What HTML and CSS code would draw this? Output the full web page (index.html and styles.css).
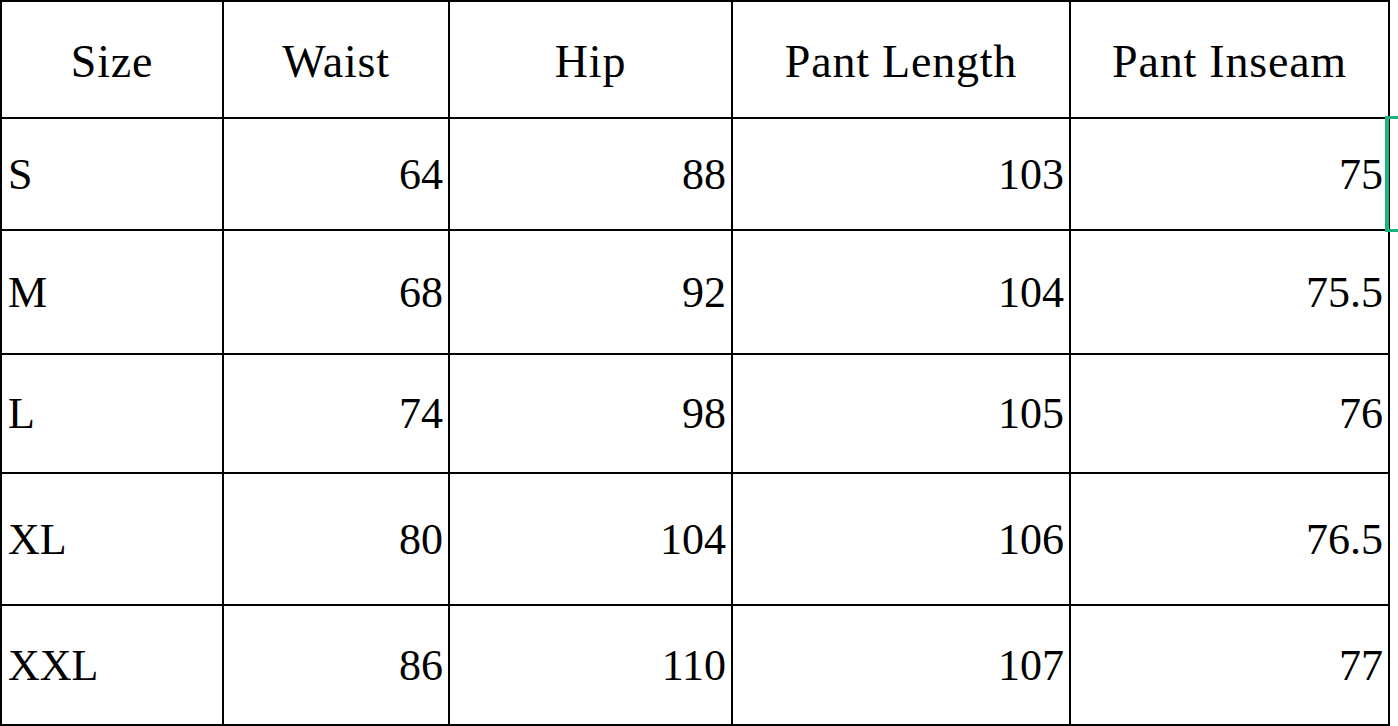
FILE: index.html
```html
<!DOCTYPE html>
<html>
<head>
<meta charset="utf-8">
<link rel="stylesheet" href="styles.css">
</head>
<body>
<div class="sheet">
  <div class="grid">
    <div class="cell head">Size</div>
    <div class="cell head">Waist</div>
    <div class="cell head">Hip</div>
    <div class="cell head">Pant Length</div>
    <div class="cell head">Pant Inseam</div>

    <div class="cell label">S</div>
    <div class="cell num">64</div>
    <div class="cell num">88</div>
    <div class="cell num">103</div>
    <div class="cell num">75</div>

    <div class="cell label">M</div>
    <div class="cell num">68</div>
    <div class="cell num">92</div>
    <div class="cell num">104</div>
    <div class="cell num">75.5</div>

    <div class="cell label">L</div>
    <div class="cell num">74</div>
    <div class="cell num">98</div>
    <div class="cell num">105</div>
    <div class="cell num">76</div>

    <div class="cell label">XL</div>
    <div class="cell num">80</div>
    <div class="cell num">104</div>
    <div class="cell num">106</div>
    <div class="cell num">76.5</div>

    <div class="cell label">XXL</div>
    <div class="cell num">86</div>
    <div class="cell num">110</div>
    <div class="cell num">107</div>
    <div class="cell num">77</div>
  </div>
  <div class="selection"></div>
</div>
</body>
</html>
```

FILE: styles.css
```css
html, body {
  margin: 0;
  padding: 0;
  background: #ffffff;
}

body {
  width: 1398px;
  height: 726px;
  overflow: hidden;
  font-family: "Liberation Serif", "Times New Roman", serif;
  color: #000000;
}

.sheet {
  position: relative;
  width: 1398px;
  height: 726px;
}

.grid {
  display: grid;
  width: 1390px;
  height: 726px;
  box-sizing: border-box;
  padding: 2px;
  gap: 2px;
  background: #000000;
  grid-template-columns: 220px 224px 281px 336px 317px;
  grid-template-rows: 115px 110px 122px 117px 130px 118px;
}

.cell {
  background: #ffffff;
  display: flex;
  align-items: center;
  font-size: 44px;
  line-height: normal;
  padding: 0 5px;
  white-space: nowrap;
}

.head {
  justify-content: center;
  font-size: 46px;
  letter-spacing: 0.8px;
  padding-top: 4px;
}

.label {
  justify-content: flex-start;
  padding-left: 6px;
}

.num {
  justify-content: flex-end;
  padding-right: 5px;
}

.selection {
  position: absolute;
  left: 1385px;
  top: 116px;
  width: 13px;
  height: 116px;
  box-sizing: border-box;
  border-left: 4px solid #1bb37f;
  border-top: 3px solid #1bb37f;
  border-bottom: 3px solid #1bb37f;
}
```
